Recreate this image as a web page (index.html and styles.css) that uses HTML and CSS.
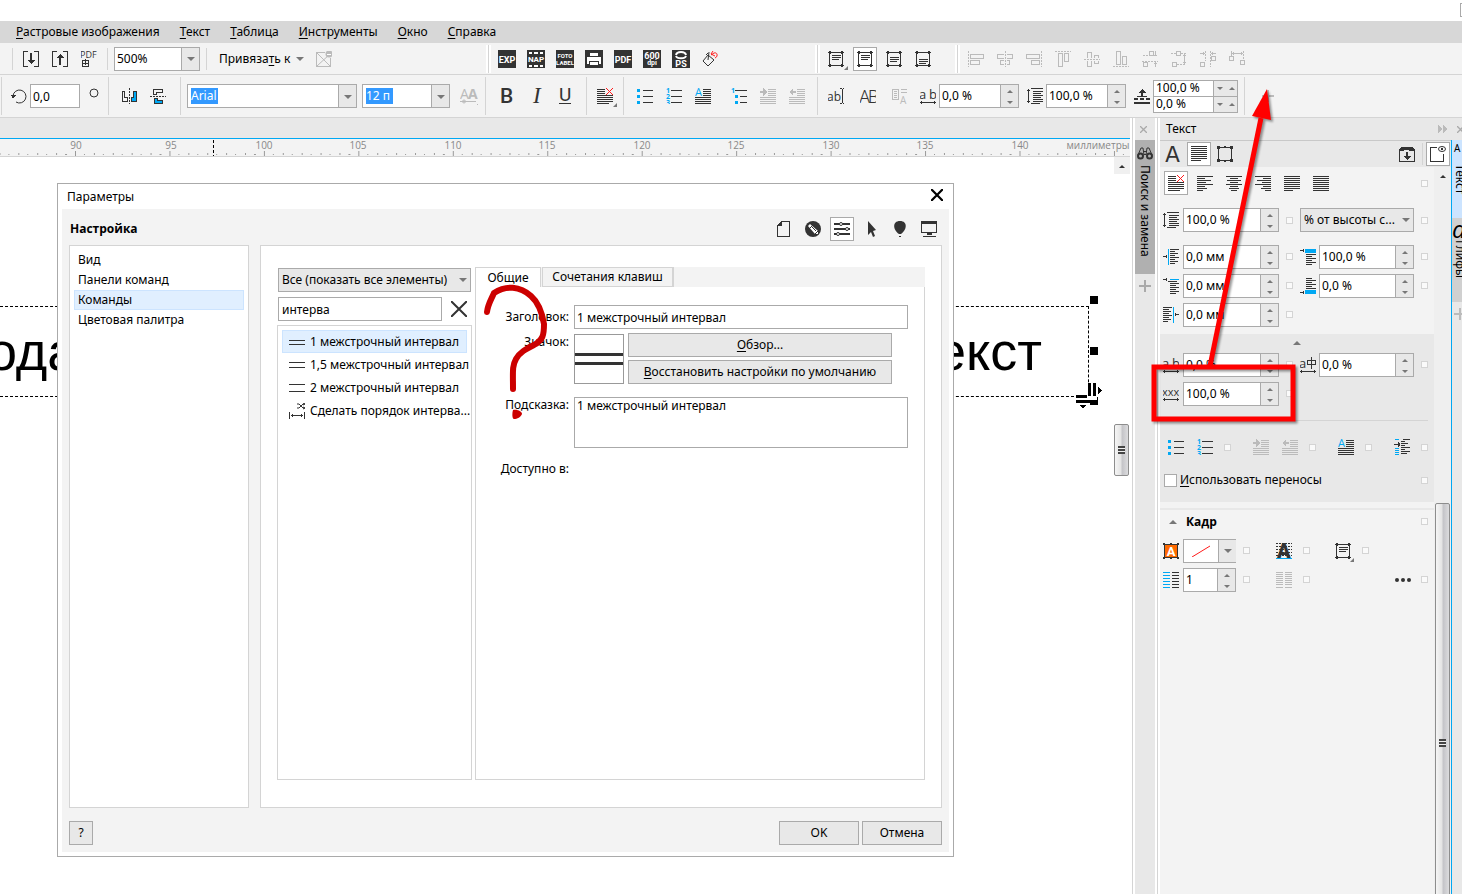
FILE: index.html
```
<!DOCTYPE html>
<html lang="ru">
<head>
    <meta charset="UTF-8">
    <meta name="viewport" content="width=device-width, initial-scale=1.0">
    <title>Параметры</title>
    <link rel="stylesheet" href="styles.css">
</head>
<body>
    <!-- Icon sprite -->
    <svg class="sprite" aria-hidden="true">
        <symbol id="import" viewBox="0 0 16 16"><path d="M5 .5H.5v15H5M11 .5h4.500v15H11"/><path class="fill" d="M7 2h2v7h3l-4 4-4-4h3z"/></symbol>
        <symbol id="export" viewBox="0 0 16 16"><path d="M5 .5H.5v15H5M11 .5h4.500v15H11"/><path class="fill" d="M7 14h2V7h3L8 3 4 7h3z"/></symbol>
        <symbol id="pdf" viewBox="0 0 16 16"><text x="-1" y="7" font-size="9">PDF</text><path d="M1.500 9.500h6v6h-6zM4.500 8v6M2 12.500h5"/></symbol>
        <symbol id="nosnap" viewBox="0 0 16 16"><path d="M9 1.500H.5v14h14V7"/><path class="soft" d="M1 2l13 13M1 15L14 3"/><circle class="fill soft" cx="13" cy="3" r="3.500"/><path class="white" d="M11 3.500h4"/></symbol>
        <symbol id="printer" viewBox="0 0 18 18"><rect class="fill" width="18" height="18"/><path class="wfill" d="M5 3h8v3H5zM2 7h14v7h-2v-3H4v3H2z"/><path class="wfill" d="M5 12h8v3H5z"/></symbol>
        <symbol id="bucket" viewBox="0 0 16 16"><path class="soft" d="M6 4l6 5-6 6-5-5zM6 9L7 1M4 4l2-2"/><path class="soft red" d="M9 4l3-2c4-1 4 4 1 5M11 0L9 3l4 2"/></symbol>
        <symbol id="frame" viewBox="0 0 16 16"><path d="M1.500 1v14M14.500 1v14M1 1.500h14M1 14.500h14"/><path class="fill" d="M0 0h3v3H0zM13 0h3v3h-3zM0 13h3v3H0zM13 13h3v3h-3zM7 0h2v2H7zM7 14h2v2H7z"/></symbol>
        <symbol id="frame-top" viewBox="0 0 16 16"><path d="M1.500 1v14M14.500 1v14M0 1.500h16M0 14.500h16M4 4.500h9M4 6.500h9M4 8.500h7"/><path class="fill" d="M1 0h2v3H1zM13 0h2v3h-2zM1 13h2v3H1zM13 13h2v3h-2z"/></symbol>
        <symbol id="frame-mid" viewBox="0 0 16 16"><path d="M1.500 1v14M14.500 1v14M0 1.500h16M0 14.500h16M4 6.500h9M4 8.500h9M4 10.500h7"/><path class="fill" d="M1 0h2v3H1zM13 0h2v3h-2zM1 13h2v3H1zM13 13h2v3h-2z"/></symbol>
        <symbol id="frame-low" viewBox="0 0 16 16"><path d="M1.500 1v14M14.500 1v14M0 1.500h16M0 14.500h16M4 8.500h9M4 10.500h9M4 12.500h7"/><path class="fill" d="M1 0h2v3H1zM13 0h2v3h-2zM1 13h2v3H1zM13 13h2v3h-2z"/></symbol>
        <symbol id="al-left" viewBox="0 0 16 16"><path class="dots" d="M.5 0v16"/><path d="M2.500 3.500h13v4h-13zM2.500 9.500h9v4h-9z"/></symbol>
        <symbol id="al-center" viewBox="0 0 16 16"><path class="dots" d="M8.500 0v16"/><path d="M7 3.500H.5v4H7M10 3.500h5.500v4H10M7 9.500H3.500v4H7M10 9.500h2.500v4H10"/></symbol>
        <symbol id="al-right" viewBox="0 0 16 16"><path class="dots" d="M15.500 0v16"/><path d="M.5 3.500h13v4H.5zM5.500 9.500h8v4h-8z"/></symbol>
        <symbol id="al-top" viewBox="0 0 16 16"><path class="dots" d="M0 .5h16"/><path d="M3.500 2.500h4v13h-4zM9.500 2.500h4v8h-4z"/></symbol>
        <symbol id="al-mid" viewBox="0 0 16 16"><path class="dots" d="M0 8.500h16"/><path d="M3.500 7V1.500h4V7M3.500 10v5.500h4V10M10.500 7V4.500h4V7M10.500 10v2.500h4V10"/></symbol>
        <symbol id="al-bottom" viewBox="0 0 16 16"><path class="dots" d="M0 15.500h16"/><path d="M3.500.5h4v13h-4zM9.500 5.500h4v8h-4z"/></symbol>
        <symbol id="ds-a" viewBox="0 0 16 16"><path class="dots" d="M1 4.500h6M0 10.500h16"/><path d="M7.500.5h4v4h-4zM1.500 11.500h4v4h-4zM13.500 0v5M12 4.500h3M13.500 11v5M12 12.500h3"/></symbol>
        <symbol id="ds-b" viewBox="0 0 16 16"><path class="dots" d="M0 2.500h5M10 2.500h6M6 13.500h9"/><path d="M5.500.5h4v4h-4zM1.500 11.500h4v4h-4zM13.500 3v10M12 4.500h3M12 11.500h3"/></symbol>
        <symbol id="ds-c" viewBox="0 0 16 16"><path class="dots" d="M5.500 0v10M10.500 0v16"/><path d="M.5 11.500h4v4h-4zM11.500 5.500h4v4h-4zM0 2.500h5M11 2.500h5M3.500 1v3M12.500 1v3"/></symbol>
        <symbol id="ds-d" viewBox="0 0 16 16"><path class="dots" d="M2.500 0v5M14.500 0v9"/><path d="M.5 5.500h4v4h-4zM11.500 9.500h4v4h-4zM2 2.500h12M4.500 1v3M12.500 1v3"/></symbol>

        <symbol id="rotate" viewBox="0 0 16 16"><path class="soft" d="M2 8a6.500 6.500 0 1 1 3 6"/><path class="fill" d="M0 7h5l-3 4z"/></symbol>
        <symbol id="degree" viewBox="0 0 16 16"><circle class="soft" cx="8" cy="5" r="4"/></symbol>
        <symbol id="mirror-h" viewBox="0 0 16 16"><path d="M1 3.500h2.500v6h3v4H1.500v-10"/><path class="dots" d="M8.500 0v16"/><path class="bluefill" d="M12.500 3.500h3v10h-5v-4h2z"/></symbol>
        <symbol id="mirror-v" viewBox="0 0 16 16"><path d="M12.500 1.500v3h-6v2h-3v-5h9"/><path class="dots" d="M0 8.500h16"/><path class="bluefill" d="M4.500 10.500h3v2h5v3h-8z"/></symbol>
        <symbol id="aa" viewBox="0 0 18 18"><text x="0" y="12" font-size="14">A</text><text x="8" y="12" font-size="14" font-weight="bold">A</text><path d="M0 14.500h16"/><circle class="soft" cx="4" cy="14.500" r="1.500"/><path class="fill" d="M19 15v4h-4z"/></symbol>
        <symbol id="bold" viewBox="0 0 16 16"><text class="face" x="1" y="15" font-size="21" font-weight="500">B</text></symbol>
        <symbol id="italic" viewBox="0 0 16 16"><text class="serif" x="5" y="15" font-size="23">I</text></symbol>
        <symbol id="under" viewBox="0 0 16 16"><text class="face" x="2" y="13" font-size="19">U</text><path d="M2 15.500h12"/></symbol>
        <symbol id="lines-x" viewBox="0 0 16 16"><path d="M0 1.500h8M0 3.500h8M0 5.500h8M0 7.500h16M0 9.500h16M0 11.500h16M0 13.500h16M0 15.500h12"/><path class="soft red" d="M9 0l7 7M16 0L9 7"/></symbol>
        <symbol id="bullets" viewBox="0 0 16 16"><path d="M6 2.500h10M6 8.500h10M6 14.500h10"/><path class="bfill" d="M0 1h3v3H0zM0 7h3v3H0zM0 13h3v3H0z"/></symbol>
        <symbol id="numbers" viewBox="0 0 16 16"><path d="M5 2.500h11M5 8.500h11M5 14.500h11"/><g class="num"><text x="0" y="5">1</text><text x="0" y="11">2</text><text x="0" y="17">3</text></g></symbol>
        <symbol id="dropcap" viewBox="0 0 16 16"><text class="num big" x="0" y="8">A</text><path d="M8 1.500h8M8 3.500h8M8 5.500h8M8 7.500h8M0 9.500h16M0 11.500h16M0 13.500h16M0 15.500h16"/></symbol>
        <symbol id="outline" viewBox="0 0 16 16"><path d="M4 2.500h12M9 8.500h7M9 14.500h7"/><text class="num" x="0" y="5">1</text><path class="bfill" d="M4 7h3v3H4zM4 13h3v3H4z"/></symbol>
        <symbol id="indent" viewBox="0 0 16 16"><path d="M8 1.500h8M8 3.500h8M8 5.500h8M8 7.500h8M0 9.500h16M0 11.500h16M0 13.500h16M0 15.500h16"/><path class="fill" d="M0 3h3V0l4 4-4 4V5H0z"/></symbol>
        <symbol id="outdent" viewBox="0 0 16 16"><path d="M8 1.500h8M8 3.500h8M8 5.500h8M8 7.500h8M0 9.500h16M0 11.500h16M0 13.500h16M0 15.500h16"/><path class="fill" d="M7 3H4V0L0 4l4 4V5h3z"/></symbol>
        <symbol id="ab-edit" viewBox="0 0 16 16"><text x="-1" y="13" font-size="12">ab</text><path d="M12 .5h2M15 .5h2M14.500 1v14M12 15.500h2M15 15.500h2"/></symbol>
        <symbol id="caps" viewBox="0 0 16 16"><text class="face" x="-1" y="15" font-size="18" font-weight="300">A</text><text class="face" x="8" y="15" font-size="18" font-weight="300">B</text></symbol>
        <symbol id="convert" viewBox="0 0 16 16"><path d="M.5 1.500h6v10h-6zM2 3.500h3M2 5.500h3M2 7.500h3M2 9.500h3M9 1.500h6M9 4.500h6"/><text x="8" y="16" font-size="10">A</text></symbol>
        <symbol id="ab" viewBox="0 0 16 16"><text x="-1" y="11" font-size="13">a</text><text x="9" y="11" font-size="13">b</text><path d="M0 14.500h16M1.500 13v3M14.500 13v3"/></symbol>
        <symbol id="leading" viewBox="0 0 16 16"><path d="M1.500 1v14M0 2.500h3M0 13.500h3M4 .5h12M6 3.500h10M6 5.500h8M6 7.500h10M6 9.500h8M6 11.500h10M6 13.500h10M4 15.500h9"/></symbol>
        <symbol id="baseline" viewBox="0 0 16 16"><path class="thick" d="M0 15h16M0 11h4M6 11h4M12 11h4"/><path class="fill" d="M8 1l4 4H9v3h4v1H3V8h4V5H4z"/></symbol>

        <symbol id="letter-a" viewBox="0 0 16 16"><text class="face" x="0" y="16" font-size="23">A</text></symbol>
        <symbol id="para" viewBox="0 0 16 16"><path d="M0 .5h16M0 2.500h16M0 4.500h16M0 6.500h16M0 8.500h16M0 10.500h16M0 12.500h16M0 14.500h10"/></symbol>
        <symbol id="t-left" viewBox="0 0 16 16"><path d="M0 1.500h16M0 3.500h8M0 5.500h14M0 7.500h9M0 9.500h16M0 11.500h8M0 13.500h10M0 15.500h6"/></symbol>
        <symbol id="t-center" viewBox="0 0 16 16"><path d="M0 1.500h16M4 3.500h8M1 5.500h14M4 7.500h8M0 9.500h16M4 11.500h8M3 13.500h10M5 15.500h6"/></symbol>
        <symbol id="t-right" viewBox="0 0 16 16"><path d="M0 1.500h16M8 3.500h8M2 5.500h14M7 7.500h9M0 9.500h16M8 11.500h8M6 13.500h10M10 15.500h6"/></symbol>
        <symbol id="t-just" viewBox="0 0 16 16"><path d="M0 1.500h16M0 3.500h16M0 5.500h16M0 7.500h16M0 9.500h16M0 11.500h16M0 13.500h16M0 15.500h9"/></symbol>
        <symbol id="t-full" viewBox="0 0 16 16"><path d="M0 1.500h16M0 3.500h16M0 5.500h16M0 7.500h16M0 9.500h16M0 11.500h16M0 13.500h16M0 15.500h16"/></symbol>
        <symbol id="ind-left" viewBox="0 0 16 16"><path d="M0 7.500h4M3.500 6v3M7 .5h9M7 2.500h5M7 4.500h8M7 6.500h5M7 8.500h9M7 10.500h5M7 12.500h8M7 14.500h5"/><path class="blue" d="M5.500 0v16"/></symbol>
        <symbol id="ind-first" viewBox="0 0 16 16"><path d="M0 1.500h4M3.500 0v3M5 3.500h9M7 5.500h9M7 7.500h6M7 9.500h9M7 11.500h6M7 13.500h9M7 15.500h6"/><path class="blue" d="M7 1.500h9"/></symbol>
        <symbol id="ind-right" viewBox="0 0 16 16"><path d="M12 7.500h4M12.500 6v3M0 .5h9M0 2.500h6M0 4.500h8M0 6.500h6M0 8.500h9M0 10.500h6M0 12.500h8M0 14.500h5"/><path class="blue" d="M10.500 0v16"/></symbol>
        <symbol id="sp-before" viewBox="0 0 16 16"><path d="M0 1.500h4M3.500 0v3M6 5.500h10M6 7.500h6M6 9.500h10M6 11.500h6M6 13.500h10M6 15.500h6"/><path class="bfill" d="M5 0h11v4H5z"/></symbol>
        <symbol id="sp-after" viewBox="0 0 16 16"><path d="M0 14.500h4M3.500 13v3M6 .5h6M6 2.500h10M6 4.500h6M6 6.500h10M6 8.500h6M6 10.500h10"/><path class="bfill" d="M5 12h11v4H5z"/></symbol>
        <symbol id="cjk" viewBox="0 0 16 16"><text x="-1" y="11" font-size="13">a</text><path d="M7.500 3.500h8v4h-8zM11.500 0v12M0 14.500h16M1.500 13v3M14.500 13v3"/></symbol>
        <symbol id="xxx" viewBox="0 0 16 16"><text x="-1" y="10" font-size="11">xxx</text><path d="M0 13.500h16M1.500 12v3M14.500 12v3"/></symbol>
        <symbol id="tab-ind" viewBox="0 0 16 16"><path d="M0 5.500h6M4.500 3v5M5.500 4v3M9 .5h7M7 2.500h4M7 4.500h7M7 6.500h4M7 8.500h9M7 10.500h4M7 12.500h9M7 14.500h6"/><path class="blue" d="M1 .5h4M1 9.500h4M1 11.500h4M1 13.500h4M1 15.500h4"/></symbol>
        <symbol id="fill-a" viewBox="0 0 16 16"><path class="orange" d="M1 1h14v14H1z"/><text class="knock" x="8" y="13" font-size="13">A</text><path d="M1.500 0v16M14.500 0v16M0 1.500h16M0 14.500h16"/><path class="fill" d="M0 0h2v2H0zM14 0h2v2h-2zM0 14h2v2H0zM14 14h2v2h-2zM7 0h2v2H7zM7 14h2v2H7z"/></symbol>
        <symbol id="wrap-a" viewBox="0 0 16 16"><path class="dots" d="M0 .5h16M0 3.500h16M0 6.500h16M0 9.500h16M0 12.500h16"/><text class="face" x="1" y="15" font-size="20" font-weight="900">A</text><path class="blue" d="M0 15.500h16"/></symbol>
        <symbol id="cols" viewBox="0 0 16 16"><path class="blue" d="M0 .5h7M0 3.500h7M0 6.500h7M0 9.500h7M0 12.500h7M0 15.500h7"/><path d="M9 .5h7M9 3.500h7M9 6.500h7M9 9.500h7M9 12.500h7M9 15.500h7"/></symbol>
        <symbol id="cols-off" viewBox="0 0 16 16"><path d="M0 .5h7M0 2.500h7M0 4.500h7M0 6.500h7M0 8.500h7M0 10.500h7M0 12.500h7M0 15.500h7M9 .5h7M9 2.500h7M9 4.500h7M9 6.500h7M9 8.500h7M9 10.500h7M9 12.500h7M9 15.500h7"/></symbol>
        <symbol id="more" viewBox="0 0 16 16"><g class="soft"><circle class="fill" cx="2" cy="8" r="2"/><circle class="fill" cx="8" cy="8" r="2"/><circle class="fill" cx="14" cy="8" r="2"/></g></symbol>
        <symbol id="dock" viewBox="0 0 16 16"><path d="M1 4.500h4M10 4.500h5M.5 3v12.500h15V3"/><path class="fill" d="M2 1h12l2 3H0zM7 6h2v4h3l-4 4-4-4h3z"/></symbol>
        <symbol id="view" viewBox="0 0 16 16"><path d="M7 1.500H.5v14h13V8"/><ellipse class="soft" cx="12" cy="3" rx="3.500" ry="2.500"/><circle class="fill" cx="12" cy="3" r="1"/></symbol>
        <symbol id="find" viewBox="0 0 16 16"><g class="soft"><path d="M1 10l3-7h2l1 7M15 10l-3-7h-2l-1 7M6 6.500h4M7 9.500h2"/><circle class="thick" cx="3.500" cy="11" r="2.500"/><circle class="thick" cx="12.500" cy="11" r="2.500"/></g></symbol>
        <symbol id="plus" viewBox="0 0 12 12"><path class="thick" d="M6 0v12M0 6h12"/></symbol>
        <symbol id="cross" viewBox="0 0 16 16"><path class="soft thick" d="M0 0l16 16M16 0L0 16"/></symbol>
        <symbol id="cross-s" viewBox="0 0 16 16"><path class="soft heavy" d="M0 0l16 16M16 0L0 16"/></symbol>
        <symbol id="chevrons" viewBox="0 0 10 8"><path class="fill" d="M0 0l5 4-5 4zM5 0l5 4-5 4z"/></symbol>
        <symbol id="none" viewBox="0 0 20 12"><path class="soft red" d="M1 12L19 1"/></symbol>

        <symbol id="page" viewBox="0 0 16 16"><path d="M6 .5h7.500v15h-12v-11z"/><path class="fill" d="M6 0v5H1z"/></symbol>
        <symbol id="pen" viewBox="0 0 16 16"><g class="soft"><circle class="fill" cx="8" cy="8" r="8"/><path class="wfill" d="M5 3l8 7 0 3-3 0-7-8z"/><path d="M4 8l4-4M10 13l3-3M7 6l4 4"/></g></symbol>
        <symbol id="sliders" viewBox="0 0 16 16"><path class="thick" d="M0 3h16M0 8h16M0 13h16"/><circle class="knob" cx="7" cy="3" r="1.500"/><circle class="knob" cx="13" cy="8" r="1.500"/><circle class="knob" cx="4" cy="13" r="1.500"/></symbol>
        <symbol id="arrow" viewBox="0 0 16 16"><path class="fill soft" d="M5 0l8 9-3 1 2 5-2 1-2-5-3 3z"/></symbol>
        <symbol id="balloon" viewBox="0 0 16 16"><path class="fill soft" d="M8 0c8 0 7 9 1 13H7C1 9 0 0 8 0zM7 15h2v1H7z"/></symbol>
        <symbol id="screen" viewBox="0 0 16 16"><path d="M.5.5h15v11H.5zM2 15.500h13"/><path class="fill" d="M0 0h16v3H0zM6 12h5v2H6z"/></symbol>
        <symbol id="line1" viewBox="0 0 16 16"><path d="M0 6.500h16M0 10.500h16"/></symbol>
        <symbol id="line15" viewBox="0 0 16 16"><path d="M0 5.500h16M0 10.500h16"/></symbol>
        <symbol id="line2" viewBox="0 0 16 16"><path d="M0 4.500h16M0 11.500h16"/></symbol>
        <symbol id="order" viewBox="0 0 16 16"><path d="M.5 9v7M15.500 9v7M2 12.500h12M3.500 11v3M12.500 11v3"/><path class="soft" d="M8 1h2l4 4h2M8 5h2l4-4h2M14 0l2 1-2 1M14 4l2 1-2 1"/></symbol>
    </svg>

    <header class="titlebar"><button class="win-btn" aria-label="Свернуть"></button></header>

    <nav class="menubar">
        <a href="#"><u>Р</u>астровые изображения</a>
        <a href="#"><u>Т</u>екст</a>
        <a href="#"><u>Т</u>аблица</a>
        <a href="#"><u>И</u>нструменты</a>
        <a href="#"><u>О</u>кно</a>
        <a href="#"><u>С</u>правка</a>
    </nav>

    <div class="toolbar standard">
        <div class="group g-edge"></div>
        <div class="group g-files">
            <button class="tool" aria-label="Импорт"><svg><use href="#import"/></svg></button>
            <button class="tool" aria-label="Экспорт"><svg><use href="#export"/></svg></button>
            <button class="tool" aria-label="PDF"><svg><use href="#pdf"/></svg></button>
        </div>
        <div class="group g-zoom">
            <div class="combo zoom"><input type="text" value="500%" aria-label="Масштаб"><button aria-label="Список"></button></div>
        </div>
        <div class="group g-snap">
            <button class="snap">Привяза<u>т</u>ь к</button>
            <svg class="off"><use href="#nosnap"/></svg>
        </div>
        <i class="grip"></i>
        <div class="group g-macros">
            <button class="tool dark" aria-label="EXP"><svg viewBox="0 0 18 18"><rect class="fill" width="18" height="18"/><text class="knock" x="9" y="13" font-size="9">EXP</text></svg></button>
            <button class="tool dark" aria-label="NAP"><svg viewBox="0 0 18 18"><rect class="fill" width="18" height="18"/><path class="white wide" d="M2 3h3M7 3h4M13 3h3M2 16h3M7 16h4M13 16h3"/><text class="knock" x="9" y="12" font-size="8">NAP</text></svg></button>
            <button class="tool dark" aria-label="FOTO LABEL"><svg viewBox="0 0 18 18"><rect class="fill" width="18" height="18"/><text class="knock" x="9" y="8" font-size="6">FOTO</text><text class="knock" x="9" y="15" font-size="6">LABEL</text></svg></button>
            <button class="tool dark" aria-label="Печать"><svg><use href="#printer"/></svg></button>
            <button class="tool dark" aria-label="PDF"><svg viewBox="0 0 18 18"><rect class="fill" width="18" height="18"/><text class="knock" x="9" y="13" font-size="9">PDF</text></svg></button>
            <button class="tool dark" aria-label="600 dpi"><svg viewBox="0 0 18 18"><rect class="fill" width="18" height="18"/><text class="knock" x="9" y="9" font-size="9">600</text><text class="knock" x="9" y="15" font-size="7">dpi</text></svg></button>
            <button class="tool dark" aria-label="PS"><svg viewBox="0 0 18 18"><rect class="fill" width="18" height="18"/><path class="white wide soft" d="M4 5c1-4 9-4 10 0M4 6c1 3 9 3 10 0"/><text class="knock" x="9" y="17" font-size="9">PS</text></svg></button>
            <button class="tool" aria-label="Заливка"><svg><use href="#bucket"/></svg></button>
        </div>
        <i class="grip"></i>
        <div class="group g-frames">
            <button class="tool more" aria-label="Рамка"><svg><use href="#frame-top"/></svg></button>
            <button class="tool active" aria-label="По верху"><svg><use href="#frame-top"/></svg></button>
            <button class="tool" aria-label="По центру"><svg><use href="#frame-mid"/></svg></button>
            <button class="tool" aria-label="По низу"><svg><use href="#frame-low"/></svg></button>
        </div>
        <i class="grip"></i>
        <div class="group g-align">
            <button class="tool off" aria-label="Слева"><svg><use href="#al-left"/></svg></button>
            <button class="tool off" aria-label="Центр"><svg><use href="#al-center"/></svg></button>
            <button class="tool off" aria-label="Справа"><svg><use href="#al-right"/></svg></button>
            <button class="tool off" aria-label="Сверху"><svg><use href="#al-top"/></svg></button>
            <button class="tool off" aria-label="Середина"><svg><use href="#al-mid"/></svg></button>
            <button class="tool off" aria-label="Снизу"><svg><use href="#al-bottom"/></svg></button>
            <button class="tool off" aria-label="Распределить 1"><svg><use href="#ds-a"/></svg></button>
            <button class="tool off" aria-label="Распределить 2"><svg><use href="#ds-b"/></svg></button>
            <button class="tool off" aria-label="Распределить 3"><svg><use href="#ds-c"/></svg></button>
            <button class="tool off" aria-label="Распределить 4"><svg><use href="#ds-d"/></svg></button>
        </div>
    </div>

    <div class="toolbar property">
        <div class="group p-angle">
            <label for="angle"><svg><use href="#rotate"/></svg></label>
            <input class="field" id="angle" type="text" value="0,0">
            <svg><use href="#degree"/></svg>
        </div>
        <div class="group p-mirror">
            <button class="tool" aria-label="Отразить по горизонтали"><svg><use href="#mirror-h"/></svg></button>
            <button class="tool" aria-label="Отразить по вертикали"><svg><use href="#mirror-v"/></svg></button>
        </div>
        <div class="group p-font">
            <div class="combo font"><input class="picked" type="text" value="Arial" aria-label="Шрифт"><button aria-label="Список шрифтов"></button></div>
            <div class="combo size"><input class="picked" type="text" value="12 п" aria-label="Размер"><button aria-label="Список размеров"></button></div>
            <button class="tool dark off" aria-label="Вариации шрифта"><svg><use href="#aa"/></svg></button>
        </div>
        <div class="group p-style">
            <button class="tool" aria-label="Полужирный"><svg><use href="#bold"/></svg></button>
            <button class="tool" aria-label="Курсив"><svg><use href="#italic"/></svg></button>
            <button class="tool" aria-label="Подчёркнутый"><svg><use href="#under"/></svg></button>
        </div>
        <div class="group p-para">
            <button class="tool more" aria-label="Выравнивание"><svg><use href="#lines-x"/></svg></button>
        </div>
        <div class="group p-lists">
            <button class="tool" aria-label="Маркеры"><svg><use href="#bullets"/></svg></button>
            <button class="tool" aria-label="Нумерация"><svg><use href="#numbers"/></svg></button>
            <button class="tool" aria-label="Буквица"><svg><use href="#dropcap"/></svg></button>
            <button class="tool gap" aria-label="Уровни"><svg><use href="#outline"/></svg></button>
            <button class="tool off" aria-label="Увеличить отступ"><svg><use href="#indent"/></svg></button>
            <button class="tool off" aria-label="Уменьшить отступ"><svg><use href="#outdent"/></svg></button>
        </div>
        <div class="group p-spacing">
            <button class="tool" aria-label="Правка текста"><svg><use href="#ab-edit"/></svg></button>
            <button class="tool" aria-label="Прописные"><svg><use href="#caps"/></svg></button>
            <button class="tool off" aria-label="Преобразовать"><svg><use href="#convert"/></svg></button>
            <label for="charsp"><svg><use href="#ab"/></svg></label>
            <div class="spin"><input id="charsp" type="text" value="0,0 %"><i class="steps"></i></div>
            <label class="next" for="linesp"><svg><use href="#leading"/></svg></label>
            <div class="spin"><input id="linesp" type="text" value="100,0 %"><i class="steps"></i></div>
            <label class="next" for="before"><svg><use href="#baseline"/></svg></label>
            <div class="stack">
                <div class="spin flat"><input id="before" type="text" value="100,0 %"><i class="steps"></i></div>
                <div class="spin flat"><input type="text" value="0,0 %" aria-label="Интервал после абзаца"><i class="steps"></i></div>
            </div>
        </div>
        <svg class="add off" viewBox="0 0 12 12"><use href="#plus"/></svg>
    </div>

    <main class="workspace">
        <section class="document">
            <div class="doc-tabs"></div>
            <svg class="ruler">
                <defs>
                    <pattern id="ticks" x="75" width="94.450" height="17" patternUnits="userSpaceOnUse">
                        <path d="M.5 12v5M9.500 15v1M19.500 14v2M28.500 15v1M38.500 14v2M47.500 15v1M57.500 14v2M66.500 15v1M76.500 14v2M85.500 15v1"/>
                    </pattern>
                </defs>
                <rect width="100%" height="17" fill="url(#ticks)" stroke="none"/>
                <path class="mark" d="M213.500 1v16"/>
                <g>
                    <text x="76" y="10">90</text><text x="171" y="10">95</text><text x="264" y="10">100</text>
                    <text x="358" y="10">105</text><text x="453" y="10">110</text><text x="547" y="10">115</text>
                    <text x="642" y="10">120</text><text x="736" y="10">125</text><text x="831" y="10">130</text>
                    <text x="925" y="10">135</text><text x="1020" y="10">140</text><text x="1098" y="10">миллиметры</text>
                </g>
            </svg>
            <div class="canvas">
                <div class="text-frame"><span>ода</span><span>екст</span></div>
                <i class="handle top"></i><i class="handle middle"></i><i class="handle bottom"></i>
                <svg class="spacers" viewBox="0 0 26 26"><path class="wfill" d="M11 0h10v17H0V9h11z"/><path d="M12 0h3v13h-3zM17 0h3v13h-3zM0 12h11v3H0zM0 17h14v3H0zM22 4l4 3-4 4zM4 22h6l-3 4zM15 18h7v4h-7z"/></svg>
                <div class="scroll-up"></div>
                <div class="thumb"></div>
            </div>
        </section>

        <aside class="find-dock">
            <button class="close" aria-label="Закрыть"><svg viewBox="0 0 16 16"><use href="#cross-s"/></svg></button>
            <button class="find-tab"><svg><use href="#find"/></svg><span>Поиск и замена</span></button>
            <button class="dock-add" aria-label="Добавить"><svg viewBox="0 0 12 12"><use href="#plus"/></svg></button>
        </aside>

        <aside class="panel">
            <div class="panel-title">
                <h2>Текст</h2>
                <svg class="chevrons off"><use href="#chevrons"/></svg>
                <svg class="small-x off" viewBox="0 0 16 16"><use href="#cross-s"/></svg>
            </div>
            <div class="panel-main">
                <div class="panel-body">
                    <div class="panel-tabs">
                        <button class="tool" aria-label="Символ"><svg><use href="#letter-a"/></svg></button>
                        <button class="tool active" aria-label="Абзац"><svg><use href="#para"/></svg></button>
                        <button class="tool" aria-label="Кадр"><svg><use href="#frame"/></svg></button>
                        <button class="tool push" aria-label="Закрепить"><svg><use href="#dock"/></svg></button>
                        <i class="rule"></i>
                        <button class="tool active" aria-label="Показать"><svg><use href="#view"/></svg></button>
                    </div>
                    <div class="panel-scroll">
                        <div class="panel-content">
                            <div class="aligns">
                                <button class="tool active" aria-label="Нет"><svg><use href="#lines-x"/></svg></button>
                                <button class="tool" aria-label="Влево"><svg><use href="#t-left"/></svg></button>
                                <button class="tool" aria-label="По центру"><svg><use href="#t-center"/></svg></button>
                                <button class="tool" aria-label="Вправо"><svg><use href="#t-right"/></svg></button>
                                <button class="tool" aria-label="По ширине"><svg><use href="#t-just"/></svg></button>
                                <button class="tool" aria-label="Полностью"><svg><use href="#t-full"/></svg></button>
                                <i class="dot push"></i>
                            </div>
                            <div class="row leading">
                                <label for="lead"><svg><use href="#leading"/></svg></label>
                                <div class="spin"><input id="lead" type="text" value="100,0 %"><i class="steps"></i></div>
                                <i class="dot"></i>
                                <div class="drop wide"><select aria-label="Единицы"><option>% от высоты с...</option></select></div>
                                <i class="dot"></i>
                            </div>
                            <div class="row">
                                <label for="in-l"><svg><use href="#ind-left"/></svg></label>
                                <div class="spin"><input id="in-l" type="text" value="0,0 мм"><i class="steps"></i></div>
                                <i class="dot"></i>
                                <label for="sp-b"><svg><use href="#sp-before"/></svg></label>
                                <div class="spin"><input id="sp-b" type="text" value="100,0 %"><i class="steps"></i></div>
                                <i class="dot"></i>
                            </div>
                            <div class="row">
                                <label for="in-f"><svg><use href="#ind-first"/></svg></label>
                                <div class="spin"><input id="in-f" type="text" value="0,0 мм"><i class="steps"></i></div>
                                <i class="dot"></i>
                                <label for="sp-a"><svg><use href="#sp-after"/></svg></label>
                                <div class="spin"><input id="sp-a" type="text" value="0,0 %"><i class="steps"></i></div>
                                <i class="dot"></i>
                            </div>
                            <div class="row">
                                <label for="in-r"><svg><use href="#ind-right"/></svg></label>
                                <div class="spin"><input id="in-r" type="text" value="0,0 мм"><i class="steps"></i></div>
                                <i class="dot"></i>
                            </div>
                            <div class="extra">
                                <i class="fold"></i>
                                <div class="row">
                                    <label for="ch"><svg><use href="#ab"/></svg></label>
                                    <div class="spin"><input id="ch" type="text" value="0,0 %"><i class="steps"></i></div>
                                    <i class="dot"></i>
                                    <label for="lang"><svg><use href="#cjk"/></svg></label>
                                    <div class="spin"><input id="lang" type="text" value="0,0 %"><i class="steps"></i></div>
                                    <i class="dot"></i>
                                </div>
                                <div class="row">
                                    <label for="word"><svg><use href="#xxx"/></svg></label>
                                    <div class="spin"><input id="word" type="text" value="100,0 %"><i class="steps"></i></div>
                                    <i class="dot"></i>
                                </div>
                                <hr>
                                <div class="lists">
                                    <button class="tool" aria-label="Маркеры"><svg><use href="#bullets"/></svg></button>
                                    <button class="tool" aria-label="Нумерация"><svg><use href="#numbers"/></svg></button>
                                    <i class="dot"></i>
                                    <button class="tool off" aria-label="Увеличить"><svg><use href="#indent"/></svg></button>
                                    <button class="tool off" aria-label="Уменьшить"><svg><use href="#outdent"/></svg></button>
                                    <i class="dot"></i>
                                    <button class="tool" aria-label="Буквица"><svg><use href="#dropcap"/></svg></button>
                                    <i class="dot"></i>
                                    <button class="tool" aria-label="Табуляция"><svg><use href="#tab-ind"/></svg></button>
                                    <i class="dot"></i>
                                </div>
                                <div class="hyphen">
                                    <input id="hyphen" type="checkbox"><label for="hyphen"><u>И</u>спользовать переносы</label>
                                    <i class="dot push"></i>
                                </div>
                            </div>
                            <div class="frame-head"><i class="fold"></i><h3>Кадр</h3><i class="dot push"></i></div>
                            <div class="row frame-row">
                                <svg><use href="#fill-a"/></svg>
                                <div class="combo fill"><span><svg viewBox="0 0 20 12"><use href="#none"/></svg></span><button aria-label="Цвет"></button></div>
                                <i class="dot"></i>
                                <button class="tool" aria-label="Обтекание"><svg><use href="#wrap-a"/></svg></button>
                                <i class="dot"></i>
                                <button class="tool more" aria-label="Вертикальное выравнивание"><svg><use href="#frame-top"/></svg></button>
                                <i class="dot"></i>
                            </div>
                            <div class="row frame-row">
                                <label for="cnum"><svg><use href="#cols"/></svg></label>
                                <div class="spin"><input id="cnum" type="text" value="1"><i class="steps"></i></div>
                                <i class="dot"></i>
                                <button class="tool off" aria-label="Колонки"><svg><use href="#cols-off"/></svg></button>
                                <i class="dot"></i>
                                <div class="tail">
                                    <button class="tool" aria-label="Ещё"><svg><use href="#more"/></svg></button>
                                    <i class="dot"></i>
                                </div>
                            </div>
                        </div>
                        <div class="scrollbar"><i class="up"></i><div class="bar"></div></div>
                    </div>
                </div>
                <div class="side-tabs">
                    <button class="side-tab current"><b>A</b><span>Текст</span></button>
                    <button class="side-tab"><em>a</em><span>Глифы</span></button>
                    <svg class="off" viewBox="0 0 12 12"><use href="#plus"/></svg>
                </div>
            </div>
        </aside>
    </main>

    <div class="dialog" role="dialog" aria-labelledby="dlg-title">
        <div class="dlg-title">
            <span id="dlg-title">Параметры</span>
            <button aria-label="Закрыть"><svg viewBox="0 0 16 16"><use href="#cross-s"/></svg></button>
        </div>
        <div class="dlg-body">
            <div class="dlg-head">
                <h1>Настройка</h1>
                <button class="tool" aria-label="Документ"><svg><use href="#page"/></svg></button>
                <button class="tool" aria-label="CorelDRAW"><svg><use href="#pen"/></svg></button>
                <button class="tool active" aria-label="Настройка"><svg><use href="#sliders"/></svg></button>
                <button class="tool" aria-label="Инструменты"><svg><use href="#arrow"/></svg></button>
                <button class="tool" aria-label="Глобальные"><svg><use href="#balloon"/></svg></button>
                <button class="tool" aria-label="Рабочее пространство"><svg><use href="#screen"/></svg></button>
            </div>
            <div class="dlg-panes">
                <ul class="pages">
                    <li>Вид</li>
                    <li>Панели команд</li>
                    <li class="selected">Команды</li>
                    <li>Цветовая палитра</li>
                </ul>
                <div class="commands">
                    <div class="finder">
                        <div class="drop"><select aria-label="Категория"><option>Все (показать все элементы)</option></select></div>
                        <div class="search">
                            <input class="field" type="text" value="интерва" aria-label="Поиск">
                            <button aria-label="Очистить"><svg><use href="#cross"/></svg></button>
                        </div>
                        <ul class="results">
                            <li class="selected"><svg><use href="#line1"/></svg>1 межстрочный интервал</li>
                            <li><svg><use href="#line15"/></svg>1,5 межстрочный интервал</li>
                            <li><svg><use href="#line2"/></svg>2 межстрочный интервал</li>
                            <li><svg><use href="#order"/></svg>Сделать порядок интерва...</li>
                        </ul>
                    </div>
                    <div class="details">
                        <div class="tabs">
                            <button class="tab current">Общие</button>
                            <button class="tab">Сочетания клавиш</button>
                        </div>
                        <form class="general">
                            <label for="caption">Заголовок:</label>
                            <input class="field" id="caption" type="text" value="1 межстрочный интервал">
                            <span class="name">Значок:</span>
                            <div class="glyph">
                                <div class="preview"></div>
                                <div class="glyph-btns">
                                    <button type="button" class="btn"><u>О</u>бзор...</button>
                                    <button type="button" class="btn"><u>В</u>осстановить настройки по умолчанию</button>
                                </div>
                            </div>
                            <label for="hint">Подсказка:</label>
                            <textarea class="field" id="hint">1 межстрочный интервал</textarea>
                            <span class="name">Доступно в:</span>
                        </form>
                    </div>
                </div>
            </div>
            <div class="dlg-foot">
                <button class="btn help">?</button>
                <button class="btn">OK</button>
                <button class="btn">Отмена</button>
            </div>
        </div>
        <svg class="question" viewBox="0 0 70 140"><path d="M5 30C6 22 9 18 12 11C24 3 38 4 49 14C57 21 60 30 62 42C62 53 61 58 52 63C44 67 38 70 34 77C30 84 31 90 31 107"/><path class="blob" d="M31 128c5-1 9 2 9 4-1 3-5 5-8 5-2 0-2-6-1-9z"/></svg>
    </div>

    <svg class="pointer" viewBox="0 0 160 350">
        <rect x="8" y="287" width="139" height="52"/>
        <path d="M64 286L115 38"/>
        <path class="head" d="M121 9l-15 27 19 4z"/>
    </svg>
</body>
</html>
```
FILE: styles.css
```
* {
    box-sizing: border-box;
}
body {
    margin: 0;
    height: 100vh;
    display: flex;
    flex-direction: column;
    position: relative;
    overflow: hidden;
    background-color: #fff;
    color: #000;
    font: 12px/16px "Noto Sans", "Open Sans", sans-serif;
}
button, input, select, textarea {
    font: inherit;
    color: inherit;
    margin: 0;
    border-radius: 0;
}
button {
    padding: 0;
    border: none;
    background: none;
}
h1, h2, h3, ul {
    margin: 0;
    padding: 0;
    font-size: 12px;
    list-style: none;
}
h1, h3 {
    font-family: "Open Sans", sans-serif;
}
h2 {
    font-weight: normal;
}
u {
    text-underline-offset: 2px;
}

/* Icons */
svg {
    display: block;
    flex: none;
    width: 16px;
    height: 16px;
    color: #333;
    fill: none;
    stroke: currentColor;
    shape-rendering: crispEdges;
    overflow: visible;
}
.sprite {
    display: none;
}
svg text {
    fill: currentColor;
    stroke: none;
    font-family: "Open Sans", sans-serif;
}
svg .face { font-family: Roboto, sans-serif; }
svg .serif { font-family: "Liberation Serif", serif; font-style: italic; }
svg .fill { fill: currentColor; stroke: none; }
svg .soft { shape-rendering: auto; }
svg .soft * { shape-rendering: auto; }
svg .thick { stroke-width: 2; }
svg .heavy { stroke-width: 3; }
svg .blue { stroke: #00a8f3; }
svg .bfill { fill: #00a8f3; stroke: none; }
svg .bluefill { fill: #00a8f3; }
svg .red { stroke: #ff1a1a; }
svg .orange { fill: #ff6a00; stroke: none; }
svg .white { stroke: #fff; }
svg .wide { stroke-width: 2; }
svg .wfill { fill: #fff; stroke: none; }
svg .dots { stroke-dasharray: 2 1; }
svg .knob { fill: #fff; shape-rendering: auto; }
svg .knock {
    fill: #fff;
    font-family: "Liberation Sans Narrow", Roboto, sans-serif;
    font-weight: bold;
    text-anchor: middle;
}
svg .num, svg .num text {
    fill: #00a8f3;
    font-size: 7px;
    font-weight: bold;
}
svg .num.big {
    font-size: 11px;
    font-weight: normal;
}
.off, .off svg {
    color: #bbb;
}

/* Shared controls */
.tool {
    flex: none;
    width: 29px;
    padding-left: 6px;
}
.tool.dark {
    padding-left: 5px;
}
.tool.dark svg {
    width: 18px;
    height: 18px;
}
.tool.active svg {
    width: 24px;
    height: 24px;
    margin: -4px;
    padding: 3px;
    border: 1px solid #aaa;
    background-color: #fff;
}
.tool.more {
    position: relative;
}
.tool.more::after {
    content: "";
    position: absolute;
    right: 3px;
    bottom: -3px;
    border: 2px solid;
    border-color: transparent #777 #777 transparent;
}
.push {
    margin-left: auto;
}
.field {
    height: 24px;
    padding: 0 2px;
    border: 1px solid #aaa;
    background-color: #fff;
}
.spin, .combo {
    display: flex;
    height: 24px;
    border: 1px solid #aaa;
    background-color: #fff;
}
.spin input, .combo input {
    flex: 1;
    min-width: 0;
    padding: 0 2px;
    border: none;
    background: none;
}
.steps {
    position: relative;
    flex: none;
    width: 18px;
    border-left: 1px solid #aaa;
    background-color: #e8e8e8;
}
.steps::before, .steps::after {
    content: "";
    position: absolute;
    left: 6px;
    top: 5px;
    border: 3px solid transparent;
    border-top-width: 0;
    border-bottom-color: #777;
}
.steps::after {
    top: 16px;
    border-width: 3px 3px 0;
    border-top-color: #777;
}
.spin.flat {
    height: 17px;
}
.spin.flat + .flat {
    margin-top: -1px;
}
.flat .steps {
    width: 24px;
}
.flat .steps::before {
    left: 15px;
    top: 6px;
}
.flat .steps::after {
    left: 3px;
    top: 6px;
}
.combo button {
    flex: none;
    width: 18px;
    border-left: 1px solid #aaa;
    background-color: #e8e8e8;
}
.combo button::after, .snap::after, .drop::after {
    content: "";
    display: inline-block;
    border: 4px solid transparent;
    border-bottom: 0;
    border-top-color: #777;
    vertical-align: middle;
}
.drop {
    position: relative;
}
.drop::after {
    position: absolute;
    right: 4px;
    top: 10px;
    pointer-events: none;
}
.drop select {
    display: block;
    width: 100%;
    height: 24px;
    padding: 0 3px;
    border: 1px solid #aaa;
    background-color: #e8e8e8;
    appearance: none;
}
.dot {
    flex: none;
    width: 7px;
    height: 7px;
    border: 1px solid #d4d4d4;
    background-color: #fafafa;
}
.btn {
    height: 24px;
    border: 1px solid #aaa;
    background-color: #e8e8e8;
}

/* Title and menu */
.titlebar {
    height: 21px;
    display: flex;
    justify-content: flex-end;
}
.win-btn {
    width: 2px;
    height: 14px;
    margin-top: 3px;
    border: 1px solid #aaa;
    border-right: 0;
}
.menubar {
    display: flex;
    gap: 20px;
    height: 22px;
    padding: 3px 16px;
    background-color: #d7d7d7;
}
.menubar a {
    color: #000;
    text-decoration: none;
}

/* Toolbars */
.toolbar {
    display: flex;
    align-items: center;
    height: 32px;
    border-bottom: 1px solid #d4d4d4;
    background-color: #f3f3f3;
}
.toolbar.property {
    height: 43px;
    padding-left: 1px;
}
.group {
    flex: none;
    display: flex;
    align-items: center;
    height: 22px;
    border-right: 1px solid #d4d4d4;
}
.property .group {
    height: 38px;
}
.property .group:first-child {
    border-left: 1px solid #d4d4d4;
}
.g-edge { width: 13px; }
.g-files { padding: 0 3px 0 4px; }
.g-zoom { padding: 0 6px; }
.combo.zoom { width: 86px; }
.g-snap {
    width: 279px;
    padding-left: 12px;
    gap: 12px;
    border: none;
}
.snap::after {
    margin-left: 6px;
}
.g-macros {
    width: 324px;
    padding-left: 2px;
    border: none;
}
.g-frames {
    width: 135px;
    padding-left: 2px;
    border: none;
}
.g-align {
    padding-left: 2px;
    border: none;
}
.grip {
    flex: none;
    width: 5px;
    height: 28px;
    border: solid #fff;
    border-width: 0 2px;
    background-color: #d4d4d4;
}
.p-angle {
    gap: 3px;
    padding: 0 6px 0 9px;
}
.p-angle .field {
    width: 50px;
    margin-right: 3px;
}
.p-mirror { padding: 0 7px 0 6px; }
.p-font {
    gap: 5px;
    padding: 0 1px 0 6px;
}
.combo.font { width: 170px; }
.combo.size { width: 88px; }
.combo .picked {
    flex: none;
    width: 27px;
    height: 16px;
    margin: 3px auto 0 3px;
    padding: 0;
    background-color: #3399ff;
    color: #fff;
}
.p-style { padding: 0 6px 0 7px; }
.p-para { padding: 0 3px 0 4px; }
.p-lists { padding: 0 5px 0 7px; }
.p-lists .gap { margin-left: 7px; }
.p-spacing {
    gap: 3px;
    padding: 0 6px 0 4px;
}
.p-spacing label {
    width: 18px;
    padding-left: 2px;
}
.p-spacing .next {
    width: 16px;
    margin-left: 5px;
    padding-left: 0;
}
.p-spacing .spin {
    width: 80px;
}
.p-spacing .flat {
    width: 85px;
}
.add {
    width: 12px;
    height: 12px;
    margin-left: 17px;
}

/* Document window */
.workspace {
    flex: 1;
    display: flex;
    min-height: 0;
}
.document {
    flex: 1;
    min-width: 0;
    display: flex;
    flex-direction: column;
}
.doc-tabs {
    height: 21px;
    border-bottom: 1px solid #00a8f3;
    background-color: #e8e8e8;
}
.ruler {
    width: 100%;
    height: 18px;
    border-bottom: 1px solid #d4d4d4;
    background-color: #f3f3f3;
    color: #999;
    overflow: hidden;
}
.ruler text {
    font-size: 10px;
    fill: #888;
    text-anchor: middle;
}
.ruler .mark {
    stroke: #000;
    stroke-dasharray: 3 2;
}
.canvas {
    flex: 1;
    position: relative;
    overflow: hidden;
}
.text-frame {
    position: absolute;
    left: -20px;
    right: 41px;
    top: 149px;
    height: 91px;
    padding: 13px 46px 0 6px;
    display: flex;
    justify-content: space-between;
    border: 1px dashed #000;
    font: 54px/62px "Liberation Sans", Arial, sans-serif;
}
.handle {
    position: absolute;
    right: 32px;
    width: 8px;
    height: 8px;
    background-color: #000;
}
.handle.top { top: 139px; }
.handle.middle { top: 190px; }
.handle.bottom { top: 240px; }
.spacers {
    position: absolute;
    right: 28px;
    top: 226px;
    width: 26px;
    height: 26px;
    fill: #000;
    stroke: none;
}
.scroll-up {
    position: absolute;
    right: 0;
    top: 0;
    width: 16px;
    height: 17px;
    background-color: #f0f0f0;
}
.scroll-up::after, .scrollbar .up::after {
    content: "";
    position: absolute;
    left: 5px;
    top: 8px;
    border: 3px solid transparent;
    border-top: 0;
    border-bottom-color: #333;
}
.thumb {
    position: absolute;
    right: 1px;
    top: 267px;
    width: 15px;
    height: 52px;
}
.thumb, .bar {
    display: flex;
    align-items: center;
    justify-content: center;
    border: 1px solid #8d8d8d;
    border-radius: 2px;
    background: linear-gradient(90deg, #f5f5f5, #e4e4e4 45%, #c4c4c8 55%, #dcdcde);
}
.thumb::after, .bar::after {
    content: "";
    width: 7px;
    height: 8px;
    background: repeating-linear-gradient(#444 0 2px, #eee 2px 3px);
}

/* Docks */
.find-dock {
    flex: none;
    width: 26px;
    margin: 0 2px;
    padding: 0 2px;
    border: solid #d4d4d4;
    border-width: 0 1px;
    background: linear-gradient(#e8e8e8, #e8e8e8) content-box;
}
.find-dock svg {
    margin: 0 auto;
}
.find-dock .close {
    display: block;
    width: 100%;
    height: 22px;
}
.find-dock .close svg, .small-x {
    width: 7px;
    height: 7px;
    color: #aaa;
}
.find-dock .close svg {
    margin-left: 5px;
}
.find-tab {
    display: flex;
    flex-direction: column;
    align-items: center;
    width: 100%;
    height: 134px;
    padding-top: 5px;
    background-color: #b0b0b0;
}
.find-tab span, .side-tab span {
    writing-mode: vertical-rl;
    line-height: 20px;
}
.find-tab span {
    margin-top: 4px;
}
.dock-add {
    display: block;
    width: 100%;
    height: 24px;
}
.dock-add svg {
    width: 12px;
    height: 12px;
    color: #aaa;
}
.panel {
    flex: none;
    width: 302px;
    display: flex;
    flex-direction: column;
    overflow: hidden;
    background-color: #f3f3f3;
}
.panel-title {
    display: flex;
    align-items: center;
    height: 22px;
    padding-left: 6px;
    background-color: #e8e8e8;
}
.chevrons {
    width: 10px;
    height: 8px;
    margin-left: auto;
}
.small-x {
    margin: 0 -2px 0 9px;
}
.panel-main {
    flex: 1;
    display: flex;
    min-height: 0;
}
.panel-body {
    flex: 1;
    display: flex;
    flex-direction: column;
    min-width: 0;
}
.panel-tabs {
    display: flex;
    align-items: center;
    height: 27px;
    border-top: 1px solid #c8c8c8;
    background-color: #e8e8e8;
}
.panel-tabs .tool {
    width: 26px;
    padding-left: 5px;
}
.panel-tabs .push {
    margin-left: auto;
}
.panel-tabs .rule {
    width: 1px;
    height: 22px;
    margin: 0 2px;
    background-color: #d4d4d4;
}
.panel-scroll {
    flex: 1;
    display: flex;
    min-height: 0;
}
.panel-content {
    flex: 1;
    min-width: 0;
}
.aligns {
    display: flex;
    align-items: center;
    height: 32px;
    padding: 0 6px 0 2px;
}
.row {
    display: grid;
    grid-template-columns: 23px 96px 21px 19px 95px 20px;
    align-items: center;
    height: 29px;
}
.row .dot {
    margin-left: 7px;
}
.row > label svg, .row > svg {
    margin-left: 3px;
}
.row > .dot + label svg {
    margin-left: 0;
}
.row.leading {
    height: 42px;
    margin-bottom: 1px;
}
.drop.wide {
    grid-column: span 2;
}
.extra {
    margin-top: 5px;
    height: 168px;
    background-color: #e8e8e8;
}
.fold {
    display: block;
    width: 0;
    border: 4px solid transparent;
    border-top: 0;
    border-bottom-color: #777;
}
.extra .fold {
    position: relative;
    top: 7px;
    margin: 0 auto 12px;
}
.extra hr {
    height: 1px;
    margin: 12px 6px 10px 4px;
    border: none;
    background-color: #d4d4d4;
}
.lists, .hyphen {
    display: flex;
    align-items: center;
    height: 32px;
    padding: 0 6px 0 2px;
}
.lists .dot {
    margin-left: 4px;
}
.lists .dot + .tool {
    margin-left: 16px;
}
.hyphen {
    gap: 3px;
    margin-top: 1px;
    padding-left: 4px;
}
.hyphen input {
    width: 13px;
    height: 13px;
    margin: 0;
    border: 1px solid #aaa;
    background-color: #fff;
    appearance: none;
}
.frame-head {
    display: flex;
    align-items: center;
    height: 28px;
    margin-top: 6px;
    padding: 0 6px 3px 9px;
    border-top: 2px solid #e8e8e8;
}
.frame-head h3 {
    margin-left: 9px;
}
.frame-row {
    grid-template-columns: 23px 53px 30px 30px 29px 30px 1fr;
}
.frame-row .tool {
    padding-left: 10px;
}
.frame-row .more::after {
    right: 0;
}
.tail {
    display: flex;
    grid-column: 6 / 8;
    align-items: center;
    justify-content: flex-end;
    padding-right: 6px;
}
.combo.fill span {
    flex: 1;
    padding: 5px 7px;
}
.combo.fill svg {
    width: 20px;
    height: 12px;
}
.scrollbar {
    position: relative;
    display: flex;
    flex-direction: column;
    width: 17px;
    padding: 336px 1px 0;
    background-color: #efefef;
}
.bar {
    flex: 1;
    min-height: 480px;
}
.scrollbar .up::after {
    left: 6px;
}
.side-tabs {
    flex: none;
    width: 11px;
    border-left: 1px solid #00a8f3;
    background-color: #e8e8e8;
    overflow: hidden;
}
.side-tab {
    display: flex;
    flex-direction: column;
    align-items: flex-start;
    height: 84px;
    background-color: #d0d0d0;
    overflow: hidden;
}
.side-tab.current {
    height: 78px;
    background-color: #cce4ff;
}
.side-tab b {
    height: 24px;
    padding-left: 2px;
    font-size: 10px;
    font-weight: normal;
}
.side-tab em {
    font: italic 24px/22px "Open Sans", sans-serif;
}
.side-tab span {
    line-height: 16px;
}
.side-tabs svg {
    margin: 6px 0 0 2px;
    width: 12px;
    height: 12px;
}

/* Options dialog */
.dialog {
    position: absolute;
    left: 57px;
    top: 183px;
    width: 897px;
    height: 674px;
    display: flex;
    flex-direction: column;
    padding: 0 4px 4px;
    border: 1px solid #aaa;
    background-color: #fff;
}
.dlg-title {
    display: flex;
    align-items: center;
    justify-content: space-between;
    height: 25px;
    padding: 0 6px 0 5px;
}
.dlg-title svg {
    width: 12px;
    height: 12px;
    margin-bottom: 3px;
    color: #000;
}
.dlg-body {
    flex: 1;
    display: flex;
    flex-direction: column;
    padding: 0 7px 7px;
    background-color: #f3f3f3;
}
.dlg-head {
    display: flex;
    align-items: center;
    height: 36px;
    margin-right: -2px;
    padding: 4px 0 0 1px;
}
.dlg-head h1 {
    margin-right: auto;
}
.dlg-panes {
    flex: 1;
    display: flex;
    gap: 11px;
    min-height: 0;
}
.pages, .commands, .results {
    border: 1px solid #d4d4d4;
    background-color: #fff;
}
.pages {
    width: 180px;
    padding: 4px;
}
.pages li {
    height: 20px;
    padding: 1px 3px;
    border: 1px solid transparent;
}
.pages .selected, .results .selected {
    border-color: #cce4ff;
    background-color: #e0efff;
}
.commands {
    flex: 1;
    display: flex;
    gap: 3px;
    padding: 21px 16px 27px;
}
.finder {
    display: flex;
    flex-direction: column;
    width: 195px;
}
.finder > .drop {
    margin: 1px 1px 5px;
}
.search {
    display: flex;
    align-items: center;
    justify-content: space-between;
    margin: 0 5px 4px 1px;
}
.search .field {
    width: 164px;
    padding-left: 3px;
}
.results {
    flex: 1;
    padding: 4px;
}
.results li {
    display: flex;
    align-items: center;
    gap: 5px;
    height: 23px;
    padding-left: 6px;
    border: 1px solid transparent;
    white-space: nowrap;
}
.details {
    flex: 1;
    display: flex;
    flex-direction: column;
}
.tabs {
    display: flex;
    gap: 1px;
    height: 20px;
    background-color: #f3f3f3;
}
.tab {
    width: 132px;
    border: 1px solid #d4d4d4;
    border-width: 1px 2px 1px 1px;
}
.tab.current {
    width: 66px;
    border-width: 1px 1px 0;
    background-color: #fff;
}
.general {
    flex: 1;
    display: grid;
    grid-template-columns: 93px 1fr;
    grid-template-rows: 24px 50px 51px 16px;
    gap: 5px;
    padding: 18px 16px 0 0;
    border: 1px solid #d4d4d4;
    border-top: 0;
}
.general label, .general .name {
    text-align: right;
}
.general label[for="caption"] {
    padding-top: 4px;
}
.general .field {
    width: 100%;
}
.glyph {
    display: flex;
    gap: 4px;
}
.preview {
    width: 50px;
    height: 50px;
    border: 1px solid #999;
    background: linear-gradient(#333, #333) 0 18px / 100% 3px no-repeat, linear-gradient(#333, #333) 0 27px / 100% 3px no-repeat;
}
.glyph-btns {
    flex: 1;
    display: flex;
    flex-direction: column;
    gap: 3px;
    margin: -1px 16px 0 0;
}
.general label[for="hint"], .general textarea {
    margin-top: 8px;
}
.general textarea {
    height: 51px;
    resize: none;
}
.general .name:last-child {
    margin-top: 16px;
}
.dlg-foot {
    display: flex;
    gap: 3px;
    padding-top: 13px;
}
.dlg-foot .btn {
    width: 80px;
}
.dlg-foot .help {
    width: 24px;
    margin-right: auto;
}

/* Hand-drawn marks */
.question {
    position: absolute;
    left: 424px;
    top: 98px;
    width: 70px;
    height: 140px;
    stroke: #c00;
    stroke-width: 6;
    stroke-linecap: round;
    shape-rendering: auto;
    pointer-events: none;
}
.question .blob {
    fill: #c00;
    stroke: none;
}
.pointer {
    position: absolute;
    right: 156px;
    top: 80px;
    width: 160px;
    height: 350px;
    stroke: #f00;
    stroke-width: 5;
    shape-rendering: auto;
    filter: drop-shadow(2px 2px 1px rgba(0,0,0,0.4));
    pointer-events: none;
}
.pointer .head {
    fill: #f00;
    stroke: none;
}
```
